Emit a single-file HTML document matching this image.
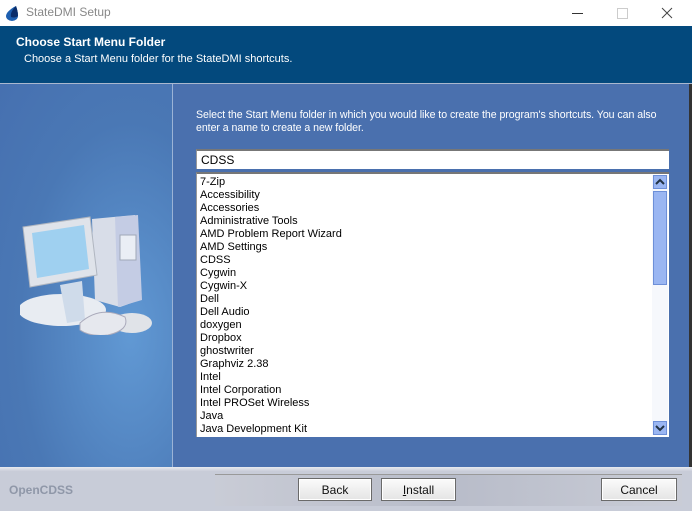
<!DOCTYPE html>
<html><head><style>
body{margin:0;width:692px;height:511px;overflow:hidden;font-family:"Liberation Sans","DejaVu Sans",sans-serif;font-size:11px;position:relative;background:#4a70ae}
.a{position:absolute}
.item{height:13px;line-height:13px}
.btn{position:absolute;top:478px;height:23px;border:1px solid #6a6a6a;background:linear-gradient(#fbfbfb,#e4e4e4);text-align:center;line-height:23px;font-size:12px;color:#111;box-sizing:border-box;box-shadow:inset 0 0 0 1px #fff}
</style></head><body>
<div class="a" style="left:0;top:0;width:692px;height:26px;background:#fff"></div>
<svg class="a" style="left:4px;top:5px" width="16" height="16"><path d="M12 1 C6 4 2 8 2 11 A6 5 0 0 0 14 11 C14 7 13 4 12 1Z" fill="#1d5fb0"/><path d="M12 1 C9 4 6 8 7 12 A5 3 0 0 0 14 11 C14 7 13 4 12 1Z" fill="#0a2d6a"/></svg>
<div class="a" style="left:26px;top:5px;font-size:12px;color:#888">StateDMI Setup</div>
<div class="a" style="left:572px;top:13px;width:11px;height:1px;background:#333"></div>
<div class="a" style="left:617px;top:8px;width:9px;height:9px;border:1px solid #ccc"></div>
<svg class="a" style="left:661px;top:7px" width="12" height="12"><path d="M1 1L11 11M11 1L1 11" stroke="#444"/></svg>
<div class="a" style="left:0;top:26px;width:692px;height:57px;background:#03497d"></div>
<div class="a" style="left:16px;top:35px;color:#fff;font-weight:bold;font-size:12px">Choose Start Menu Folder</div>
<div class="a" style="left:24px;top:53px;color:#fff;font-size:11px">Choose a Start Menu folder for the StateDMI shortcuts.</div>
<div class="a" style="left:0;top:83px;width:692px;height:1px;background:#aab8cf"></div>
<div class="a" style="left:0;top:84px;width:172px;height:383px;background:radial-gradient(ellipse at 130px 250px,#6199d4,#4a78b5 60%,#4670b0)"></div>
<div class="a" style="left:172px;top:84px;width:1px;height:383px;background:#9bb3d6"></div>
<div class="a" style="left:689px;top:84px;width:3px;height:383px;background:#333"></div>
<svg class="a" style="left:20px;top:205px" width="135" height="130">
<ellipse cx="42" cy="105" rx="44" ry="16" fill="#e8ecf2"/>
<path d="M72 14 L115 10 L120 95 L100 102 L75 95Z" fill="#d8dde8"/><path d="M95 12 L118 10 L122 95 L98 102Z" fill="#c4cce4"/>
<rect x="100" y="30" width="16" height="25" fill="#eaeef5" stroke="#a0a8b8"/>
<path d="M3 22 L70 12 L77 70 L10 82Z" fill="#dfe3ea" stroke="#b0b6c0"/>
<path d="M12 28 L64 20 L69 64 L17 73Z" fill="#9fd0f0"/>
<path d="M40 80 L62 76 L65 115 L47 118Z" fill="#cfdbea"/>
<ellipse cx="112" cy="118" rx="20" ry="10" fill="#e0e3e8"/>
<path d="M60 118 Q80 100 105 112 Q110 125 88 130 Q70 132 60 125Z" fill="#e6e8ee" stroke="#aab"/>
</svg>
<div class="a" style="left:196px;top:109px;width:473px;overflow:hidden;color:#fff;line-height:13px;white-space:nowrap;font-size:10.6px;letter-spacing:-0.05px">Select the Start Menu folder in which you would like to create the program's shortcuts. You can also<br>enter a name to create a new folder.</div>
<div class="a" style="left:196px;top:149px;width:473px;height:20px;background:#fff;border-top:2px solid #777;border-left:1px solid #999;box-sizing:border-box;padding:2px 4px;font-size:12px">CDSS</div>
<div class="a" style="left:196px;top:172px;width:473px;height:265px;background:#fff;border-top:2px solid #777;border-left:1px solid #999;box-sizing:border-box;padding:2px 3px;font-size:11px;overflow:hidden">
<div class="item">7-Zip</div><div class="item">Accessibility</div><div class="item">Accessories</div><div class="item">Administrative Tools</div><div class="item">AMD Problem Report Wizard</div><div class="item">AMD Settings</div><div class="item">CDSS</div><div class="item">Cygwin</div><div class="item">Cygwin-X</div><div class="item">Dell</div><div class="item">Dell Audio</div><div class="item">doxygen</div><div class="item">Dropbox</div><div class="item">ghostwriter</div><div class="item">Graphviz 2.38</div><div class="item">Intel</div><div class="item">Intel Corporation</div><div class="item">Intel PROSet Wireless</div><div class="item">Java</div><div class="item">Java Development Kit</div>
</div>
<div class="a" style="left:652px;top:175px;width:16px;height:260px;background:#f6f8fc"></div>
<div class="a" style="left:653px;top:175px;width:14px;height:14px;background:#9ab6f2;border:1px solid #6d8fd8;box-sizing:border-box"></div>
<svg class="a" style="left:655px;top:178px" width="10" height="8"><path d="M1 6L5 2L9 6" stroke="#234" stroke-width="2" fill="none"/></svg>
<div class="a" style="left:653px;top:191px;width:14px;height:94px;background:#9ab6f2;border:1px solid #6d8fd8;box-sizing:border-box"></div>
<div class="a" style="left:653px;top:421px;width:14px;height:14px;background:#9ab6f2;border:1px solid #6d8fd8;box-sizing:border-box"></div>
<svg class="a" style="left:655px;top:424px" width="10" height="8"><path d="M1 2L5 6L9 2" stroke="#234" stroke-width="2" fill="none"/></svg>
<div class="a" style="left:0;top:467px;width:692px;height:44px;background:linear-gradient(#e8eaf0,#c8ccd8 10%,#c8ccd8)"></div>
<div class="a" style="left:9px;top:483px;color:#8f97a8;font-weight:bold;font-size:12px">OpenCDSS</div>
<div class="a" style="left:215px;top:474px;width:467px;height:31px;background:linear-gradient(90deg,#c9ccd6,#b8bcc9 50%,#c9ccd6);border-top:1px solid #999"></div>
<div class="btn" style="left:298px;width:74px">Back</div>
<div class="btn" style="left:381px;width:75px"><u>I</u>nstall</div>
<div class="btn" style="left:601px;width:76px">Cancel</div>
</body></html>
